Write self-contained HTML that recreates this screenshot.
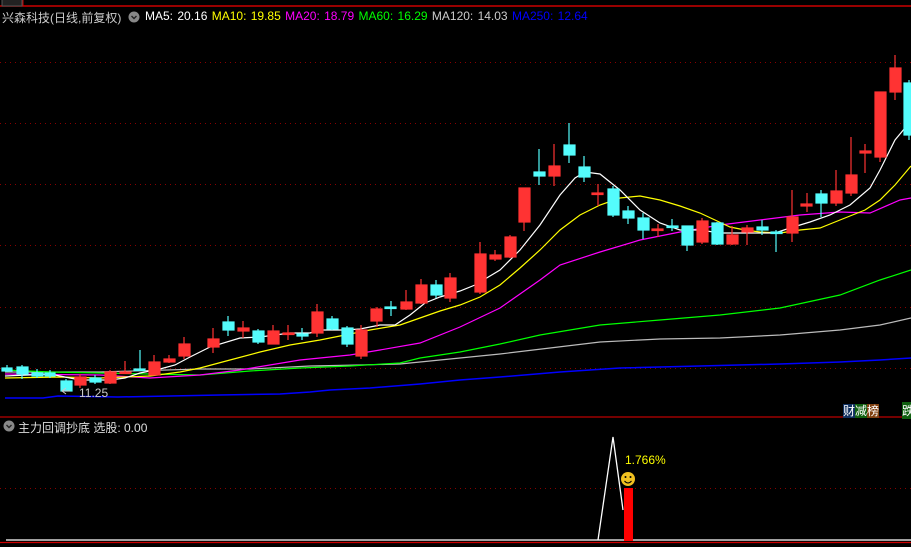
<!DOCTYPE html>
<html><head><meta charset="utf-8"><style>
body{margin:0;background:#000;width:911px;height:547px;overflow:hidden;position:relative;font-family:"Liberation Sans","Noto Sans CJK SC",sans-serif}
svg{position:absolute;left:0;top:0}
.t{position:absolute;font-size:12px;white-space:nowrap}
</style></head><body>
<svg width="911" height="547" viewBox="0 0 911 547">
<line x1="0" y1="6" x2="911" y2="6" stroke="#c00" stroke-width="1.5"/>
<rect x="2" y="-2" width="20" height="8" fill="#222" stroke="#555"/>
<line x1="23" y1="0" x2="23" y2="6" stroke="#c00"/>
<g stroke="#800" stroke-dasharray="1,4" stroke-width="1">
<line x1="0" y1="62.5" x2="911" y2="62.5"/><line x1="0" y1="123.5" x2="911" y2="123.5"/><line x1="0" y1="184.5" x2="911" y2="184.5"/><line x1="0" y1="245.5" x2="911" y2="245.5"/><line x1="0" y1="307.5" x2="911" y2="307.5"/><line x1="0" y1="368.5" x2="911" y2="368.5"/><line x1="0" y1="488.5" x2="911" y2="488.5"/>
</g>
<line x1="0" y1="417" x2="911" y2="417" stroke="#b00" stroke-width="1.2"/>
<line x1="6" y1="540" x2="911" y2="540" stroke="#fff" stroke-width="1.2"/>
<line x1="0" y1="542.5" x2="911" y2="542.5" stroke="#c00" stroke-width="1.2"/>
<g fill="none" stroke-width="1.2">
<polyline stroke="#00f" stroke-width="1.5" points="5,398 43,398 58,396 118,397 220,395 280,394 310,392 330,390 370,388 420,384 460,380 500,377 560,372 620,368 700,366 780,364 840,362 880,360 911,358"/>
<polyline stroke="#bbb" points="5,372 100,372 200,369 250,369 310,366 360,365 400,364 460,358 500,354 550,348 600,342 660,339 720,338 780,335 840,330 880,325 911,318"/>
<polyline stroke="#0f0" points="5,370 50,372 100,373 150,374 200,375 250,371 300,368 350,366 400,363 420,358 460,352 500,344 540,335 600,325 660,320 720,315 780,308 840,295 880,280 911,270"/>
<polyline stroke="#f0f" points="5,374 100,375 150,378 200,375 240,370 300,360 350,355 380,350 420,343 460,327 500,308 540,280 560,265 600,252 640,240 680,232 720,225 760,220 800,215 840,212 870,213 900,200 911,198"/>
<polyline stroke="#ff0" points="5,378 60,377 100,378 150,376 180,372 200,368 230,360 260,352 290,345 320,340 345,335 370,330 400,325 420,318 440,311 460,305 480,297 500,285 520,268 540,250 560,230 580,215 600,205 620,198 640,196 660,200 680,206 700,213 715,220 730,227 745,230 760,232 780,233 800,230 820,228 835,222 850,216 865,210 880,200 895,185 911,166"/>
<polyline stroke="#fff" points="5,376 50,374 80,380 110,380 125,378 140,373 160,369 175,365 190,357 210,347 240,338 260,337 290,333 310,333 320,330 345,330 360,329 380,325 395,325 410,315 425,303 440,297 460,291 475,285 500,270 520,250 540,225 560,195 575,178 585,172 600,174 620,190 640,210 660,223 680,230 700,230 720,233 740,233 760,233 775,233 790,228 810,222 830,215 850,205 870,188 880,170 895,140 905,128 911,125"/>
</g>
<g stroke-width="1.2">
<g stroke="#54fcfc" fill="#54fcfc">
<line x1="7" y1="365" x2="7" y2="372"/><rect x="2" y="368" width="10" height="3"/>
<line x1="22" y1="365" x2="22" y2="379"/><rect x="17" y="367" width="11" height="7"/>
<line x1="37" y1="369" x2="37" y2="378"/><rect x="32" y="373" width="11" height="3"/>
<line x1="50" y1="370" x2="50" y2="378"/><rect x="45" y="373" width="10" height="3"/>
<line x1="66" y1="379" x2="66" y2="391"/><rect x="61" y="381" width="11" height="10"/>
<line x1="95" y1="375" x2="95" y2="384"/><rect x="90" y="378" width="11" height="4"/>
<line x1="140" y1="350" x2="140" y2="370"/><rect x="134" y="369" width="11" height="1.5"/>
<line x1="228" y1="316" x2="228" y2="336"/><rect x="223" y="322" width="11" height="8"/>
<line x1="258" y1="329" x2="258" y2="344"/><rect x="253" y="331" width="11" height="11"/>
<line x1="302" y1="328" x2="302" y2="340"/><rect x="297" y="334" width="11" height="2"/>
<line x1="332" y1="316" x2="332" y2="330"/><rect x="327" y="319" width="11" height="10"/>
<line x1="347" y1="326" x2="347" y2="347"/><rect x="342" y="328" width="11" height="16"/>
<line x1="391" y1="301" x2="391" y2="316"/><rect x="385" y="307" width="11" height="1.5"/>
<line x1="436" y1="280" x2="436" y2="298"/><rect x="431" y="285" width="11" height="10"/>
<line x1="539" y1="149" x2="539" y2="185"/><rect x="534" y="172" width="11" height="4"/>
<line x1="569" y1="123" x2="569" y2="163"/><rect x="564" y="145" width="11" height="10"/>
<line x1="584" y1="156" x2="584" y2="182"/><rect x="579" y="167" width="11" height="10"/>
<line x1="613" y1="186" x2="613" y2="217"/><rect x="608" y="189" width="11" height="26"/>
<line x1="628" y1="206" x2="628" y2="224"/><rect x="623" y="211" width="11" height="7"/>
<line x1="643" y1="213" x2="643" y2="239"/><rect x="638" y="218" width="11" height="12"/>
<line x1="672" y1="219" x2="672" y2="231"/><rect x="667" y="226" width="11" height="1.5"/>
<line x1="687" y1="226" x2="687" y2="251"/><rect x="682" y="226" width="11" height="19"/>
<line x1="717" y1="222" x2="717" y2="245"/><rect x="712" y="223" width="11" height="21"/>
<line x1="762" y1="220" x2="762" y2="235"/><rect x="757" y="227" width="11" height="3"/>
<line x1="776" y1="230" x2="776" y2="252"/><rect x="771" y="232" width="11" height="1.5"/>
<line x1="821" y1="190" x2="821" y2="217"/><rect x="816" y="194" width="11" height="9"/>
<rect x="904" y="83" width="11" height="52"/><line x1="909" y1="80" x2="909" y2="140"/>
</g>
<g stroke="#ff3333" fill="#ff3333">
<line x1="80" y1="374" x2="80" y2="388"/><rect x="75" y="377" width="11" height="8"/>
<line x1="110" y1="370" x2="110" y2="384"/><rect x="105" y="372" width="11" height="11"/>
<line x1="125" y1="361" x2="125" y2="373"/><rect x="120" y="372" width="11" height="1.5"/>
<line x1="154" y1="355" x2="154" y2="375"/><rect x="149" y="362" width="11" height="13"/>
<line x1="169" y1="355" x2="169" y2="363"/><rect x="164" y="359" width="11" height="3"/>
<line x1="184" y1="337" x2="184" y2="359"/><rect x="179" y="344" width="11" height="12"/>
<line x1="213" y1="328" x2="213" y2="353"/><rect x="208" y="339" width="11" height="8"/>
<line x1="243" y1="321" x2="243" y2="338"/><rect x="238" y="328" width="11" height="3"/>
<line x1="273" y1="325" x2="273" y2="344"/><rect x="268" y="331" width="11" height="13"/>
<line x1="288" y1="325" x2="288" y2="340"/><rect x="283" y="333" width="11" height="1.5"/>
<line x1="317" y1="304" x2="317" y2="337"/><rect x="312" y="312" width="11" height="21"/>
<line x1="361" y1="325" x2="361" y2="359"/><rect x="356" y="330" width="11" height="26"/>
<line x1="377" y1="307" x2="377" y2="327"/><rect x="371" y="309" width="11" height="12"/>
<line x1="406" y1="290" x2="406" y2="310"/><rect x="401" y="302" width="11" height="7"/>
<line x1="421" y1="279" x2="421" y2="304"/><rect x="416" y="285" width="11" height="18"/>
<line x1="450" y1="273" x2="450" y2="302"/><rect x="445" y="278" width="11" height="20"/>
<line x1="480" y1="242" x2="480" y2="294"/><rect x="475" y="254" width="11" height="38"/>
<line x1="495" y1="250" x2="495" y2="261"/><rect x="490" y="255" width="11" height="4"/>
<line x1="510" y1="235" x2="510" y2="258"/><rect x="505" y="237" width="11" height="20"/>
<line x1="524" y1="188" x2="524" y2="231"/><rect x="519" y="188" width="11" height="34"/>
<line x1="554" y1="144" x2="554" y2="186"/><rect x="549" y="166" width="11" height="10"/>
<line x1="598" y1="184" x2="598" y2="206"/><rect x="592" y="193" width="11" height="1.5"/>
<line x1="658" y1="224" x2="658" y2="237"/><rect x="652" y="229" width="11" height="1.5"/>
<line x1="702" y1="218" x2="702" y2="244"/><rect x="697" y="221" width="11" height="21"/>
<line x1="732" y1="226" x2="732" y2="245"/><rect x="727" y="235" width="11" height="9"/>
<line x1="747" y1="225" x2="747" y2="245"/><rect x="742" y="228" width="11" height="4"/>
<line x1="792" y1="190" x2="792" y2="242"/><rect x="787" y="217" width="11" height="16"/>
<line x1="807" y1="193" x2="807" y2="212"/><rect x="801" y="204" width="11" height="2"/>
<line x1="836" y1="170" x2="836" y2="206"/><rect x="831" y="191" width="11" height="12"/>
<line x1="851" y1="137" x2="851" y2="196"/><rect x="846" y="175" width="11" height="18"/>
<line x1="865" y1="144" x2="865" y2="173"/><rect x="860" y="151" width="11" height="2"/>
<line x1="880" y1="92" x2="880" y2="162"/><rect x="875" y="92" width="11" height="65"/>
<line x1="895" y1="55" x2="895" y2="100"/><rect x="890" y="68" width="11" height="24"/>
</g>
</g>
<polyline fill="none" stroke="#fff" stroke-width="1.3" points="598,540 613,437 623,510"/>
<rect x="624" y="488" width="9" height="53" fill="#f00"/>
<circle cx="628" cy="479" r="7" fill="#f0c020"/>
<circle cx="625.5" cy="477" r="1" fill="#000"/><circle cx="630.5" cy="477" r="1" fill="#000"/>
<path d="M624.5 481 Q628 485 631.5 481" stroke="#000" fill="none" stroke-width="1"/>
<circle cx="134" cy="17" r="5.5" fill="#888"/><path d="M131.5 16 L134 18.5 L136.5 16" stroke="#222" fill="none" stroke-width="1.4"/>
<circle cx="9" cy="426" r="5.5" fill="#888"/><path d="M6.5 425 L9 427.5 L11.5 425" stroke="#222" fill="none" stroke-width="1.4"/>
<path d="M62 391 L70 391 M62 391 L66 388 M62 391 L66 394" stroke="#ccc" fill="none"/>
</svg>
<div class="t" style="left:2px;top:9px;color:#ccc">兴森科技(日线,前复权)</div>
<div class="t" style="left:145px;top:9px;word-spacing:1px"><span style="color:#fff">MA5: 20.16</span> <span style="color:#ff0">MA10: 19.85</span> <span style="color:#f0f">MA20: 18.79</span> <span style="color:#0f0">MA60: 16.29</span> <span style="color:#ccc">MA120: 14.03</span> <span style="color:#00f">MA250: 12.64</span></div>
<div class="t" style="left:79px;top:386px;color:#ccc">11.25</div>
<div class="t" style="left:18px;top:419px;color:#ddd">主力回调抄底 <span>选股: 0.00</span></div>
<div class="t" style="left:625px;top:453px;color:#ff0">1.766%</div>
<div class="t" style="left:843px;top:402px;font-size:12px"><span style="background:#103060;color:#fff">财</span><span style="background:#106010;color:#fff">减</span><span style="background:#804010;color:#fff">榜</span></div>
<div class="t" style="left:902px;top:402px;background:#106010;color:#fff">跌</div>
</body></html>
